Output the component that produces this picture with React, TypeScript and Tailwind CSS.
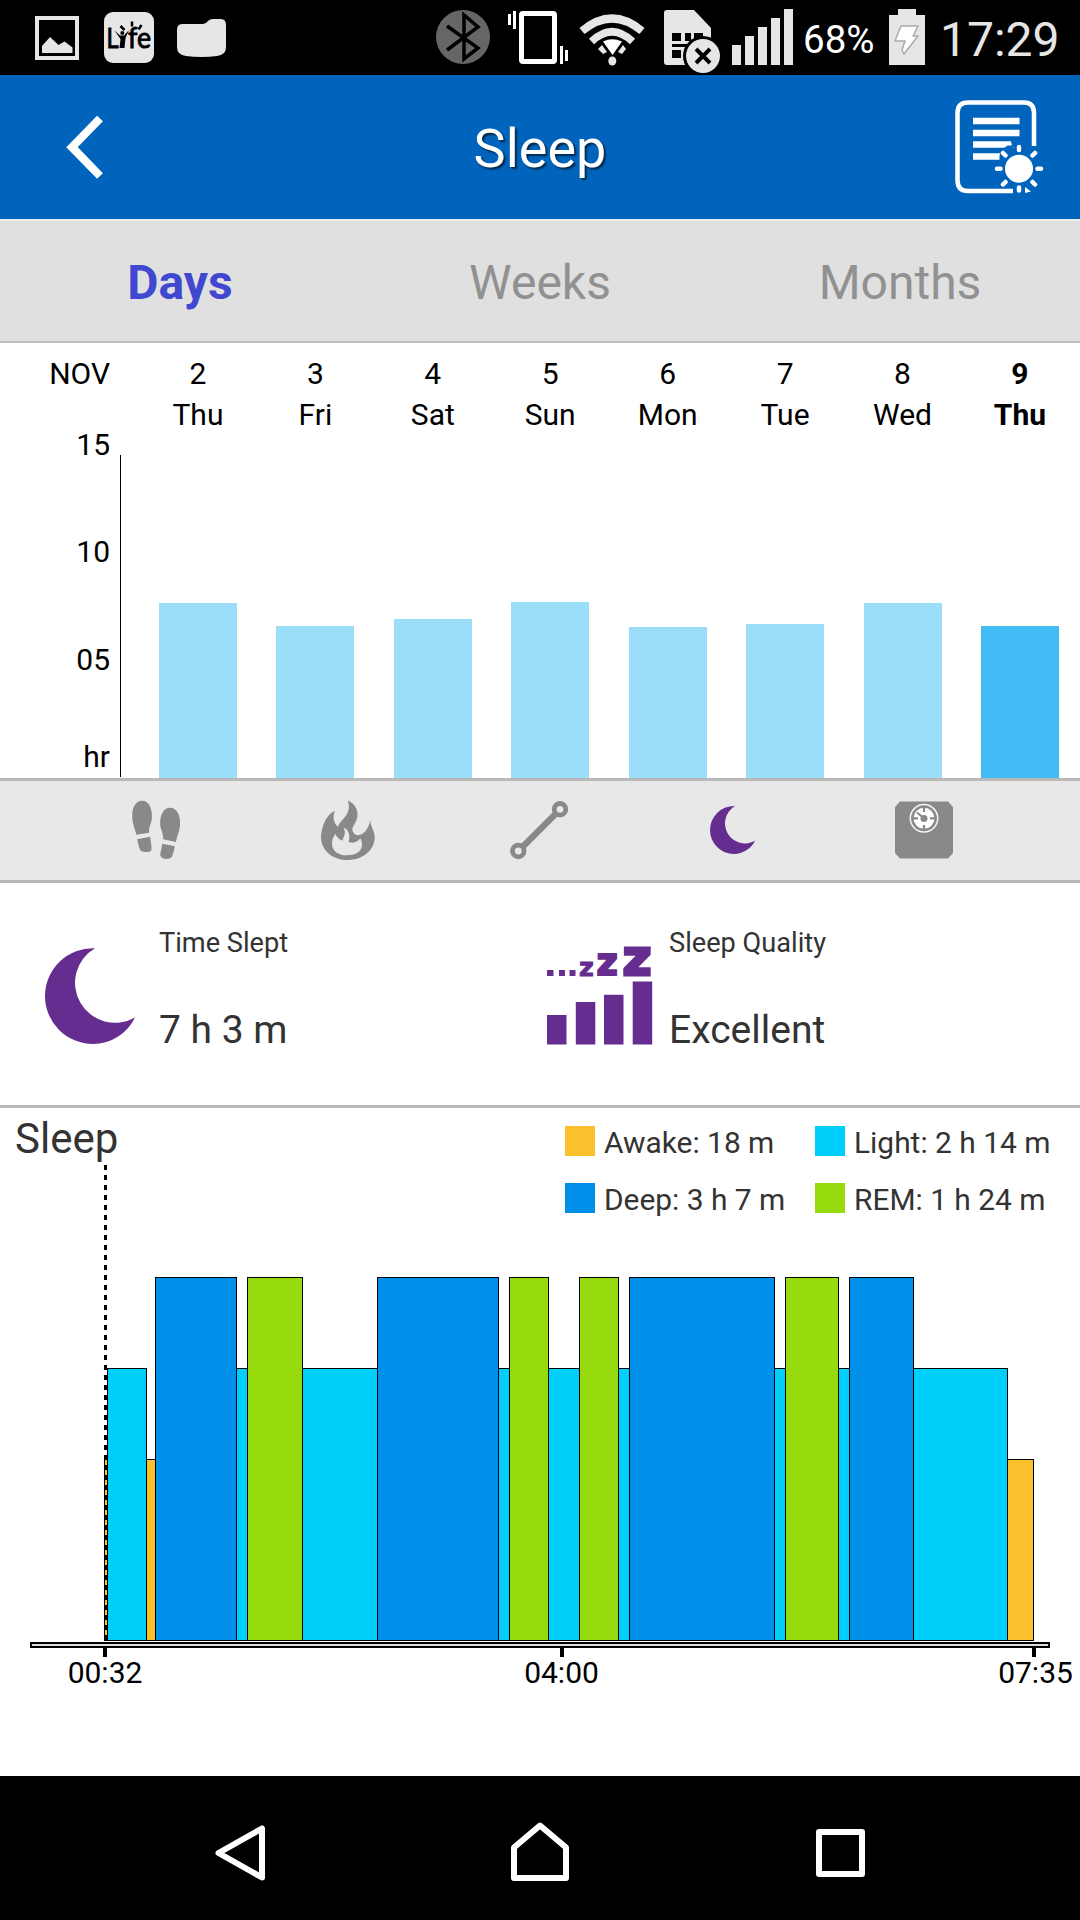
import React from "react";

const days = [
  { date: "2", name: "Thu", height: 175 },
  { date: "3", name: "Fri", height: 152 },
  { date: "4", name: "Sat", height: 159 },
  { date: "5", name: "Sun", height: 176 },
  { date: "6", name: "Mon", height: 151 },
  { date: "7", name: "Tue", height: 154 },
  { date: "8", name: "Wed", height: 175 },
  { date: "9", name: "Thu", height: 152, active: true },
];

type Phase = "awake" | "light" | "deep" | "rem";

const phaseStyle: Record<Phase, string> = {
  awake: "h-[182px] bg-[#fbc12d]",
  light: "h-[273px] bg-[#00cefb]",
  deep: "h-[364px] bg-[#008fe9]",
  rem: "h-[364px] bg-[#97da0d]",
};

const phases: { kind: Phase; width: number }[] = [
  { kind: "awake", width: 3 },
  { kind: "light", width: 39 },
  { kind: "awake", width: 9 },
  { kind: "deep", width: 81 },
  { kind: "light", width: 11 },
  { kind: "rem", width: 55 },
  { kind: "light", width: 75 },
  { kind: "deep", width: 121 },
  { kind: "light", width: 11 },
  { kind: "rem", width: 39 },
  { kind: "light", width: 31 },
  { kind: "rem", width: 39 },
  { kind: "light", width: 11 },
  { kind: "deep", width: 145 },
  { kind: "light", width: 11 },
  { kind: "rem", width: 53 },
  { kind: "light", width: 11 },
  { kind: "deep", width: 64 },
  { kind: "light", width: 94 },
  { kind: "awake", width: 26 },
];

function StatusBar() {
  return (
    <div className="flex h-[75px] shrink-0 bg-black text-[#e6e6e6]">
      <svg className="h-[75px] w-[240px]" viewBox="0 0 240 75" fill="#e6e6e6">
        <rect x="37" y="18" width="40" height="40" fill="none" stroke="#e6e6e6" strokeWidth="4" />
        <path d="M42 53V46L50 37L58.500 45L64.500 41.500L72.500 47.500V53Z" />
        <rect x="104" y="12" width="50" height="51" rx="9" />
        <g fontFamily="Lato, sans-serif" fill="#000" stroke="#000" strokeWidth=".9">
          <text x="106.500" y="47.500" fontSize="27" textLength="12" lengthAdjust="spacingAndGlyphs">L</text>
          <text x="128" y="47.500" fontSize="28" textLength="23" lengthAdjust="spacingAndGlyphs">fe</text>
        </g>
        <g fill="#000">
          <path d="M114.500 30.500L120 35.500H124L129 30L125.500 38L124.500 48H119.500L120.500 39Z" />
          <circle cx="122.300" cy="33" r="2" />
        </g>
        <path d="M120.500 26L124.500 30M132 21.500V26.500M141.500 25L138.500 29.500" fill="none" stroke="#000" strokeWidth="2.500" />
        <path d="M182 24H203Q206 24 208 21Q210 19 213 19H221Q226 19 226 25V47Q226 55 217 56Q202 58 186 56Q177 55 177 47V30Q177 24 182 24Z" />
      </svg>
      <svg className="ml-[190px] h-[75px] w-[370px]" viewBox="430 0 370 75" fill="#e6e6e6">
        <circle cx="463" cy="37" r="27" fill="#666" />
        <path d="M447 26L478 48L464 59V15L478 27L447 50" fill="none" stroke="#000" strokeWidth="3.500" />
        <rect x="521.500" y="13.500" width="33" height="48" rx="1.500" fill="none" stroke="#fff" strokeWidth="5" />
        <path d="M508 14h3v11h-3zM513 11h3v18h-3zM560 46h3v18h-3zM565 50h3v11h-3z" fill="#fff" />
        <g fill="none" stroke="#e6e6e6">
          <path d="M582 31Q612 6 642 31" strokeWidth="8" />
          <path d="M591.500 41.500Q612 22 632.500 41.500" strokeWidth="7.500" />
        </g>
        <path d="M603 41.500Q612 37 622 41.500L612.500 55Z" fill="#fff" />
        <path d="M602 45L607 52L603 54L598 49Z" />
        <path d="M623 45L618 52L622 54L626 49Z" />
        <ellipse cx="612.300" cy="61" rx="4" ry="4.500" />
        <path d="M667 10H694L711 28V65H667Q664 65 664 62V13Q664 10 667 10Z" />
        <path d="M672 33h9v8h-9zM685 33h6v8h-6zM694 33h9v8h-9zM672 44h18v3h-18zM672 50h9v8h-9z" fill="#000" />
        <circle cx="703" cy="56" r="20" fill="#000" />
        <circle cx="703" cy="56" r="17" />
        <path d="M696 49L710 63M710 49L696 63" stroke="#000" strokeWidth="4" />
        <path d="M732 45h9v20h-9zM745 36h9v29h-9zM758 27h9v38h-9zM771 18h9v47h-9zM784 9h9v56h-9z" />
      </svg>
      <span className="mt-[2px] ml-[3px] w-[72px] text-[38.5px] leading-[75px] text-white">68%</span>
      <svg className="ml-[10px] h-[75px] w-[47px]" viewBox="885 0 47 75" fill="#e6e6e6">
        <path d="M898 9H916V15H925V65H889V15H898Z" />
        <path d="M901 26H918L913 36H918L904 54L902 50L905 41H895Z" fill="#fff" stroke="#aaa" strokeWidth="1.500" strokeLinejoin="round" />
      </svg>
      <span className="mt-[2px] ml-[8px] text-[48px] leading-[75px]">17:29</span>
    </div>
  );
}

function Header() {
  return (
    <header className="flex h-[146px] shrink-0 justify-between border-b-2 border-[#eee] bg-[#0064bd]">
      <svg className="h-[144px] w-[200px]" viewBox="0 75 200 144">
        <path d="M100 118.500L72 147.200L100 176" fill="none" stroke="#fff" strokeWidth="8.200" />
      </svg>
      <h1 className="text-[54px] leading-[147px] text-white [text-shadow:2px_2px_2px_rgba(0,0,0,0.6)]">Sleep</h1>
      <svg className="h-[144px] w-[200px]" viewBox="880 75 200 144" fill="none" stroke="#fff">
        <path d="M1034 146V113Q1034 102.500 1024 102.500H968Q957.500 102.500 957.500 113V180Q957.500 191 968 191H1013" strokeWidth="4.500" />
        <path d="M973 121H1019.500M973 133H1019.500M973 144.500H1014M973 156.500H1000" strokeWidth="6.500" />
        <path d="M1012 141Q1016 148 1008 147Q1000 151 1001 160" stroke="#0064bd" strokeWidth="3" />
        <circle cx="1019" cy="168.700" r="14" fill="#fff" stroke="none" />
        <g strokeWidth="4.500" strokeLinecap="round">
          <path d="M1019 147V150M1019 187.500V190.500M997 168.700H1000.500M1037.500 168.700H1041M1003 153L1005.500 155.500M1035 153L1032.500 155.500M1003 184.500L1005.500 182M1035 184.500L1032.500 182" />
        </g>
        <path d="M1025 187L1031 191.500L1025 193Z" fill="#fff" stroke="none" />
      </svg>
    </header>
  );
}

function Tabs() {
  return (
    <nav className="grid h-[122px] shrink-0 grid-cols-3 border-b-2 border-[#bdbdbd] bg-[#e0e0e0] text-center text-[48px] leading-[123px] text-[#919191]">
      <span className="font-bold text-[#4048d0]">Days</span>
      <span>Weeks</span>
      <span>Months</span>
    </nav>
  );
}

function WeekChart() {
  return (
    <section className="flex h-[435px] shrink-0 text-[30px] text-black">
      <div className="flex w-[110px] flex-col pt-[10px] text-right leading-[30px]">
        <span className="leading-[41px]">NOV</span>
        <span className="mt-[36px]">15</span>
        <span className="mt-[77px]">10</span>
        <span className="mt-[78px]">05</span>
        <span className="mt-[67px]">hr</span>
      </div>
      <div className="mt-[112px] ml-[10px] h-[322px] w-px bg-black" />
      <div className="ml-[18.235px] grid w-[939.44px] grid-cols-8">
        {days.map((d) => (
          <div
            key={d.date}
            className={`flex flex-col items-center pt-[10px] leading-[41px] ${d.active ? "font-bold" : ""}`}
          >
            <span>{d.date}</span>
            <span>{d.name}</span>
            <div
              className={`mt-auto w-[78px] ${d.active ? "bg-[#41bcf5]" : "bg-[#9cdefa]"}`}
              style={{ height: d.height }}
            />
          </div>
        ))}
      </div>
    </section>
  );
}

function Moon({ className }: { className: string }) {
  return (
    <svg className={className} viewBox="0 0 45 48" fill="#662d91">
      <path d="M25 0.100A24 24 0 0 0 0 24A24 24 0 0 0 24 48A23.500 23.500 0 0 0 45 34.700A19.930 19.930 0 0 1 25 0.100Z" />
    </svg>
  );
}

function MetricBar() {
  return (
    <div className="flex h-[105px] shrink-0 border-y-[3px] border-[#b9b9b9] bg-[#e8e8e8] pl-[60px]">
      <svg className="h-[99px] w-[192px]" viewBox="60 781 192 99" fill="#898989">
        <g transform="translate(0 560) scale(.34436 .33333)">
          <path d="M396 824C390 800 383 785 384 765C385 735 398 722 412 722C430 722 443 740 441 775C440 795 432 795 433 818Z" />
          <path d="M398 838L436 830C438 850 442 862 439 872C432 878 412 878 407 870C402 860 402 850 398 838Z" />
          <path d="M474 838C474 810 464 810 465 785C467 755 480 742 495 743C515 745 524 765 523 795C521 815 515 825 511 846Z" />
          <path d="M471 851L508 859C504 875 502 890 494 895C482 899 470 896 466 888C464 880 470 865 471 851Z" />
        </g>
      </svg>
      <svg className="h-[99px] w-[192px]" viewBox="252 781 192 99" fill="#898989">
        <g transform="translate(0 560) scale(.34436 .33333)">
          <path
            fillRule="evenodd"
            d="M1010 721C1034 733 1043 755 1036 778C1030 798 1015 806 1029 821C1048 838 1073 805 1075 780C1078 806 1088 812 1088 832C1088 870 1055 900 1010 900C965 900 932 870 932 830C934 795 950 762 973 752C964 772 970 790 982 801C986 778 1024 768 1010 721ZM975 822C958 838 956 886 1008 886C1056 886 1056 850 1046 835C1038 848 1022 851 1012 845C1018 828 1013 808 998 803C1006 820 998 830 994 842C982 836 977 830 975 822Z"
          />
        </g>
      </svg>
      <svg className="h-[99px] w-[192px]" viewBox="444 781 192 99" fill="none" stroke="#898989">
        <circle cx="518.300" cy="851" r="5.800" strokeWidth="4.800" />
        <circle cx="560" cy="809.300" r="5.800" strokeWidth="4.800" />
        <path d="M523 846.500L555.500 814" strokeWidth="6.400" />
      </svg>
      <div className="w-[192px] pt-[25px] pl-[73.5px]">
        <Moon className="h-[48px] w-[45px]" />
      </div>
      <svg className="h-[99px] w-[192px]" viewBox="828 781 192 99" fill="#898989">
        <path d="M900 801.500H948L953 807V853L948 858.500H900L895 853V807Z" />
        <circle cx="924" cy="818.300" r="13.700" fill="none" stroke="#f4f4f4" strokeWidth="1.500" />
        <circle cx="924" cy="818.300" r="10.500" fill="#fff" />
        <circle cx="924" cy="818.500" r="3.500" />
        <path d="M924 807V812M924 825V830M913 818.300H918M930 818.300H935M917 812.500L923 817.500" stroke="#898989" strokeWidth="2.200" />
      </svg>
    </div>
  );
}

function Summary() {
  return (
    <section className="flex h-[225px] shrink-0 border-b-[3px] border-[#b9b9b9] text-[#333]">
      <div className="flex w-[547px] pl-[45px]">
        <Moon className="mt-[65px] h-[96px] w-[90px]" />
        <div className="ml-[24px] flex flex-col pt-[40px]">
          <span className="text-[27.2px] leading-[41px]">Time Slept</span>
          <span className="mt-[41px] text-[39px] leading-[50px]">7 h 3 m</span>
        </div>
      </div>
      <div className="flex">
        <svg className="mt-[57px] h-[110px] w-[108px]" viewBox="547 940 108 110" fill="#662d91">
          <path d="M547 1015h19.500v29.500h-19.500zM575.800 1002h19.500v42.500h-19.500zM604 994.700h19.500v49.800h-19.500zM632.700 981.500h19.500v63h-19.500z" />
          <path d="M547 970h6.500v6h-6.500zM559 970h6v6h-6zM569.500 970h6v6h-6z" />
          <g fontFamily="'DejaVu Sans', sans-serif" fontWeight="700" stroke="#662d91">
            <text x="579" y="975.500" fontSize="25.500" strokeWidth="1">z</text>
            <text x="596.500" y="975" fontSize="36.500" strokeWidth="2">z</text>
            <text x="622.500" y="974.500" fontSize="50" strokeWidth="3">z</text>
          </g>
        </svg>
        <div className="ml-[14px] flex flex-col pt-[40px]">
          <span className="text-[27.2px] leading-[41px]">Sleep Quality</span>
          <span className="mt-[41px] text-[39px] leading-[50px]">Excellent</span>
        </div>
      </div>
    </section>
  );
}

function LegendItem({ color, label }: { color: string; label: string }) {
  return (
    <div className="flex h-[30px]">
      <span className={`mr-[9px] size-[30px] ${color}`} />
      <span className="whitespace-nowrap leading-[34px]">{label}</span>
    </div>
  );
}

function SleepChart() {
  return (
    <section className="relative flex grow flex-col bg-white">
      <div className="flex h-[169px] justify-between text-[#333]">
        <h2 className="pt-[6px] pl-[15px] text-[42px] leading-[50px]">Sleep</h2>
        <div className="grid w-[515px] grid-cols-[250px_265px] content-start gap-y-[27px] pt-[18px] text-[29.9px]">
          <LegendItem color="bg-[#fbc12d]" label="Awake: 18 m" />
          <LegendItem color="bg-[#00cefb]" label="Light: 2 h 14 m" />
          <LegendItem color="bg-[#008fe9]" label="Deep: 3 h 7 m" />
          <LegendItem color="bg-[#97da0d]" label="REM: 1 h 24 m" />
        </div>
      </div>
      <div className="flex h-[364px] items-end pl-[104px]">
        {phases.map((p, i) => (
          <div
            key={i}
            className={`-mr-px shrink-0 border border-black ${phaseStyle[p.kind]}`}
            style={{ width: p.width + 1 }}
          />
        ))}
      </div>
      {/* Bedtime marker running over the first segment */}
      <div className="absolute top-[57px] left-[104px] h-[476px] w-[3px] bg-[repeating-linear-gradient(to_bottom,#000_0px,#000_5px,transparent_5px,transparent_10px)]" />
      <div className="mt-px ml-[30px] h-[6px] w-[1020px] border-2 border-black bg-[#dedede]" />
      <div className="flex text-[30px] leading-[32px] text-black">
        <div className="ml-[65px] flex w-[80px] flex-col items-center">
          <span className="h-[9px] w-[4px] bg-black" />
          <span>00:32</span>
        </div>
        <div className="ml-[377px] flex w-[80px] flex-col items-center">
          <span className="h-[9px] w-[4px] bg-black" />
          <span className="mr-px">04:00</span>
        </div>
        <div className="ml-[392px] flex w-[80px] flex-col items-center">
          <span className="h-[9px] w-[4px] bg-black" />
          <span className="ml-[3px]">07:35</span>
        </div>
      </div>
    </section>
  );
}

function NavBar() {
  return (
    <nav className="flex h-[144px] shrink-0 justify-between bg-black px-[190px]">
      <svg className="h-[144px] w-[100px]" viewBox="190 1776 100 144" fill="none" stroke="#fff" strokeWidth="6" strokeLinejoin="round">
        <path d="M262 1828.500V1877.500L218.500 1853Z" />
      </svg>
      <svg className="h-[144px] w-[100px]" viewBox="490 1776 100 144" fill="none" stroke="#fff" strokeWidth="6" strokeLinejoin="round">
        <path d="M514 1878V1847.500L540 1825.500L566 1847.500V1878Z" />
      </svg>
      <svg className="h-[144px] w-[100px]" viewBox="790 1776 100 144" fill="none" stroke="#fff" strokeWidth="6" strokeLinejoin="round">
        <path d="M819 1832H862V1874H819Z" />
      </svg>
    </nav>
  );
}

export default function App() {
  return (
    <div className="flex h-[1920px] w-[1080px] flex-col overflow-hidden bg-white font-[Roboto,sans-serif]">
      <StatusBar />
      <Header />
      <Tabs />
      <WeekChart />
      <MetricBar />
      <Summary />
      <SleepChart />
      <NavBar />
    </div>
  );
}
